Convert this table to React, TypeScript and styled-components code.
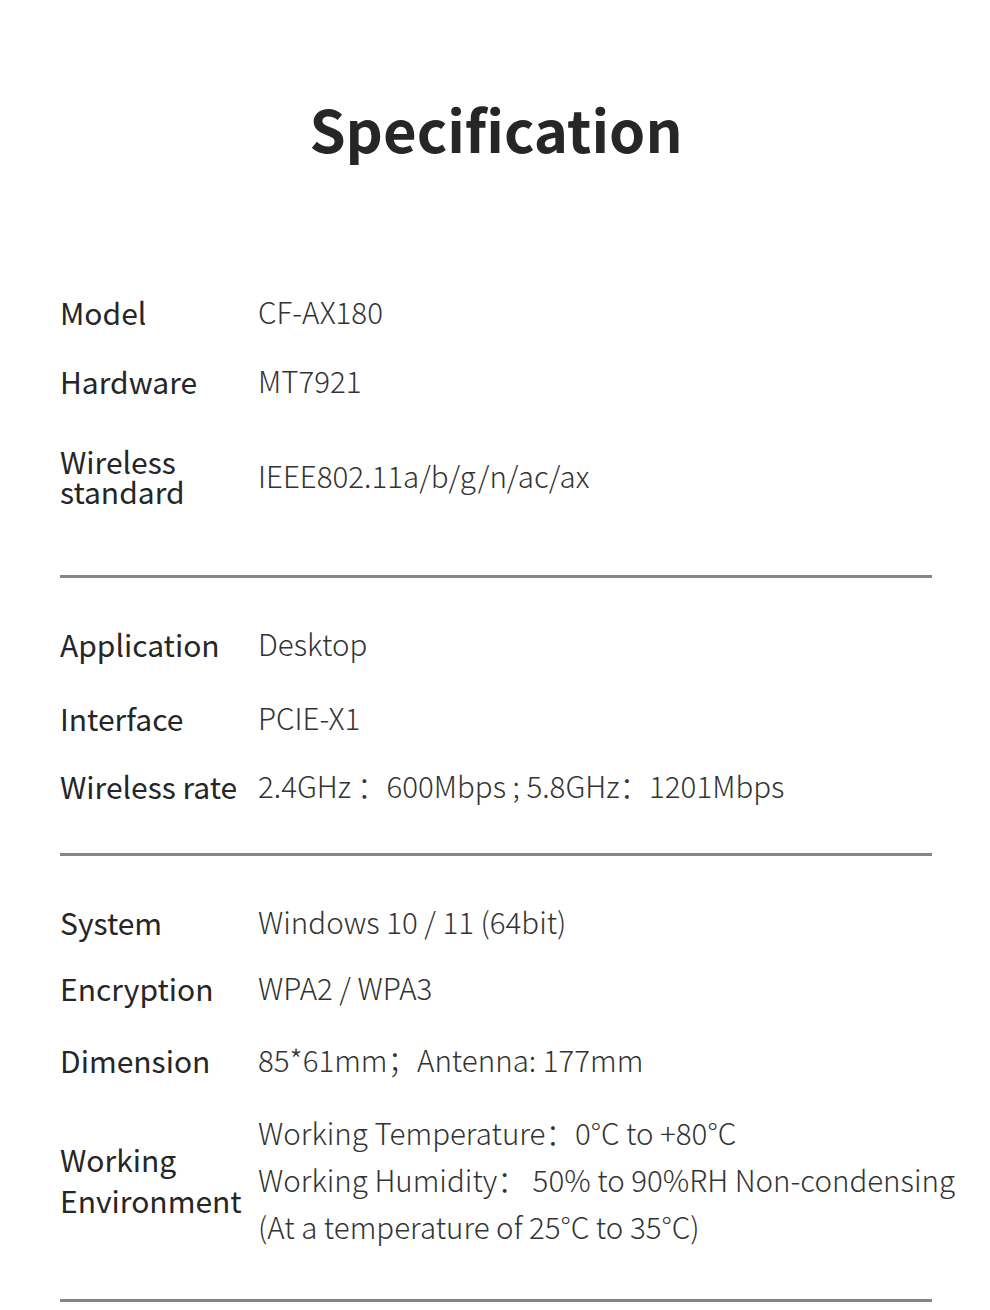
import React from 'react';
import styled, { createGlobalStyle } from 'styled-components';

const GlobalStyle = createGlobalStyle`
  html, body {
    margin: 0;
    padding: 0;
    background: #fff;
  }
  body {
    font-family: "Noto Sans CJK SC", "Noto Sans", sans-serif;
    color: #262626;
  }
`;

const Page = styled.div`
  width: 990px;
  height: 1310px;
  overflow: hidden;
  background: #fff;
  padding: 86px 58px 0 60px;
  box-sizing: border-box;
`;

const Title = styled.h1`
  margin: 0 0 110px;
  height: 84px;
  text-align: center;
  font-size: 58px;
  font-weight: 700;
  line-height: 84px;
  color: #262626;
`;

const Section = styled.section`
  display: flex;
  flex-direction: column;
  padding: 34px 0 37px;
  border-bottom: 3px solid #858585;
  &:first-of-type {
    padding-top: 0;
  }
`;

const Row = styled.div<{ $h: number }>`
  height: ${p => p.$h}px;
  display: grid;
  grid-template-columns: 198px 1fr;
  align-items: center;
  padding-bottom: 5px;
  box-sizing: border-box;
`;

const Label = styled.div<{ $lh?: number }>`
  font-size: 30px;
  font-weight: 400;
  line-height: ${p => p.$lh || 34}px;
  color: #262626;
  white-space: pre-line;
`;

const Value = styled.div`
  font-size: 29.5px;
  font-weight: 300;
  line-height: 47px;
  color: #333;
  white-space: pre;
  margin-bottom: 1px;
`;

export default function App() {
  return (
    <Page>
      <GlobalStyle />
      <Title>Specification</Title>
      <Section>
        <Row $h={68}>
          <Label>Model</Label>
          <Value>CF-AX180</Value>
        </Row>
        <Row $h={70}>
          <Label>Hardware</Label>
          <Value>MT7921</Value>
        </Row>
        <Row $h={120}>
          <Label $lh={30}>{'Wireless\nstandard'}</Label>
          <Value>IEEE802.11a/b/g/n/ac/ax</Value>
        </Row>
      </Section>
      <Section>
        <Row $h={68}>
          <Label>Application</Label>
          <Value>Desktop</Value>
        </Row>
        <Row $h={80}>
          <Label>Interface</Label>
          <Value>PCIE-X1</Value>
        </Row>
        <Row $h={56}>
          <Label>Wireless rate</Label>
          <Value>{'2.4GHz\u2009：600Mbps ; 5.8GHz：1201Mbps'}</Value>
        </Row>
      </Section>
      <Section>
        <Row $h={68}>
          <Label>System</Label>
          <Value>Windows 10 / 11 (64bit)</Value>
        </Row>
        <Row $h={64}>
          <Label>Encryption</Label>
          <Value>WPA2 / WPA3</Value>
        </Row>
        <Row $h={80}>
          <Label>Dimension</Label>
          <Value>85*61mm；Antenna: 177mm</Value>
        </Row>
        <Row $h={160}>
          <Label $lh={41}>{'Working\nEnvironment'}</Label>
          <Value>
            {'Working Temperature：0°C to +80°C\nWorking Humidity：\u200950% to 90%RH Non-condensing\n(At a temperature of 25°C to 35°C)'}
          </Value>
        </Row>
      </Section>
    </Page>
  );
}
